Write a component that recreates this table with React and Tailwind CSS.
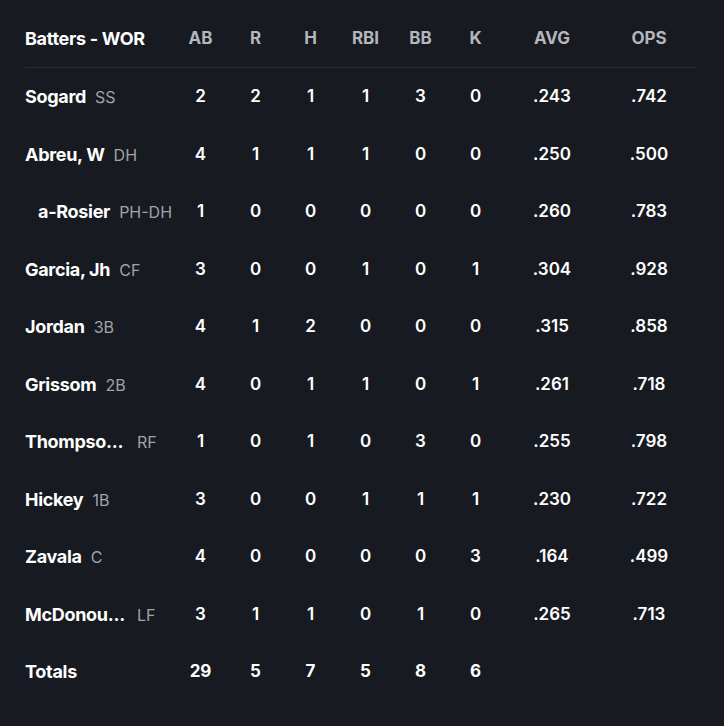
const stats = ["AB", "R", "H", "RBI", "BB", "K"];

const batters = [
  { name: "Sogard", pos: "SS", s: [2, 2, 1, 1, 3, 0], avg: ".243", ops: ".742" },
  { name: "Abreu, W", pos: "DH", s: [4, 1, 1, 1, 0, 0], avg: ".250", ops: ".500" },
  { name: "a-Rosier", pos: "PH-DH", s: [1, 0, 0, 0, 0, 0], avg: ".260", ops: ".783", sub: true },
  { name: "Garcia, Jh", pos: "CF", s: [3, 0, 0, 1, 0, 1], avg: ".304", ops: ".928" },
  { name: "Jordan", pos: "3B", s: [4, 1, 2, 0, 0, 0], avg: ".315", ops: ".858" },
  { name: "Grissom", pos: "2B", s: [4, 0, 1, 1, 0, 1], avg: ".261", ops: ".718" },
  { name: "Thompso...", pos: "RF", s: [1, 0, 1, 0, 3, 0], avg: ".255", ops: ".798", cut: true },
  { name: "Hickey", pos: "1B", s: [3, 0, 0, 1, 1, 1], avg: ".230", ops: ".722" },
  { name: "Zavala", pos: "C", s: [4, 0, 0, 0, 0, 3], avg: ".164", ops: ".499" },
  { name: "McDonou...", pos: "LF", s: [3, 1, 1, 0, 1, 0], avg: ".265", ops: ".713", cut: true },
];

const totals = [29, 5, 7, 5, 8, 6];

function StatCells({ values, bold }) {
  return values.map((v, i) => (
    <div
      key={i}
      className={`w-[55px] text-center ${bold ? "font-bold" : "font-semibold"}`}
    >
      {v}
    </div>
  ));
}

export default function App() {
  return (
    <div
      className="min-h-[726px] w-[724px] bg-[#171a20] text-white pt-[10px] pl-[25px] pr-[27px]"
      style={{ fontFamily: "Inter, 'Noto Sans', sans-serif" }}
    >
      {/* header */}
      <div className="flex items-center h-[57px] text-[17px] font-bold">
        <div className="w-[148px] text-[18px] tracking-[-0.3px]">Batters - WOR</div>
        {stats.map((s) => (
          <div key={s} className="w-[55px] text-center text-[#b3b6bb]">
            {s}
          </div>
        ))}
        <div className="w-[98px] text-center text-[#b3b6bb]">AVG</div>
        <div className="w-[96px] text-center text-[#b3b6bb]">OPS</div>
      </div>
      <div className="h-px bg-[#2b2f37]" />

      {batters.map((b) => (
        <div key={b.name} className="flex items-center h-[57.5px] text-[17px]">
          <div className={`w-[148px] flex items-baseline whitespace-nowrap ${b.sub ? "pl-[13px]" : ""}`}>
            <span
              className={`font-bold text-[18px] tracking-[-0.3px] ${b.cut ? "w-[104px]" : ""}`}
            >
              {b.name}
            </span>
            <span className={`${b.cut ? "ml-[8px]" : "ml-[9px]"} text-[16px] text-[#a0a3a8]`}>
              {b.pos}
            </span>
          </div>
          <StatCells values={b.s} />
          <div className="w-[98px] text-center font-semibold">{b.avg}</div>
          <div className="w-[96px] text-center font-semibold">{b.ops}</div>
        </div>
      ))}

      <div className="flex items-center h-[57.5px] text-[17px]">
        <div className="w-[148px] font-bold text-[18px] tracking-[-0.3px]">Totals</div>
        <StatCells values={totals} bold />
      </div>
    </div>
  );
}
